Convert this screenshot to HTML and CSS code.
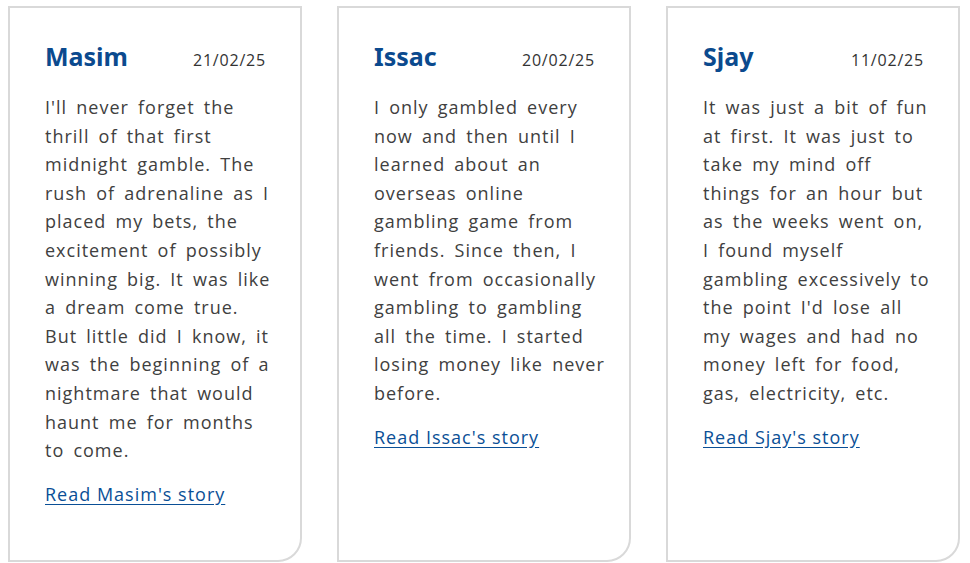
FILE: index.html
```html
<!DOCTYPE html>
<html lang="en">
<head>
<meta charset="utf-8">
<title>Stories</title>
<link rel="stylesheet" href="styles.css">
</head>
<body>
<div class="cards">
  <article class="card">
    <header class="card-head">
      <h2 class="name">Masim</h2>
      <span class="date">21/02/25</span>
    </header>
    <p class="text">I'll never forget the thrill of that first midnight gamble. The rush of adrenaline as I placed my bets, the excitement of possibly winning big. It was like a dream come true. But little did I know, it was the beginning of a nightmare that would haunt me for months to come.</p>
    <a class="link" href="#">Read Masim's story</a>
  </article>
  <article class="card">
    <header class="card-head">
      <h2 class="name">Issac</h2>
      <span class="date">20/02/25</span>
    </header>
    <p class="text">I only gambled every now and then until I learned about an overseas online gambling game from friends. Since then, I went from occasionally gambling to gambling all the time. I started losing money like never before.</p>
    <a class="link" href="#">Read Issac's story</a>
  </article>
  <article class="card">
    <header class="card-head">
      <h2 class="name">Sjay</h2>
      <span class="date">11/02/25</span>
    </header>
    <p class="text">It was just a bit of fun at first. It was just to take my mind off things for an hour but as the weeks went on, I found myself gambling excessively to the point I'd lose all my wages and had no money left for food, gas, electricity, etc.</p>
    <a class="link" href="#">Read Sjay's story</a>
  </article>
</div>
</body>
</html>
```
FILE: styles.css
```css
html, body {
  margin: 0;
  padding: 0;
  background: #ffffff;
}
body {
  font-family: "Open Sans", "Liberation Sans", sans-serif;
  color: #404040;
}
.cards {
  display: flex;
  gap: 35px;
  padding: 6px 0 0 8px;
}
.card {
  box-sizing: border-box;
  width: 294px;
  height: 556px;
  border: 2px solid #d9d9d9;
  border-bottom-right-radius: 24px;
  padding: 33px 22px 0 35px;
}
.card-head {
  display: flex;
  justify-content: space-between;
  align-items: baseline;
  margin-bottom: 22px;
  padding-right: 12px;
}
.name {
  margin: 0;
  font-family: "Noto Sans", sans-serif;
  font-weight: 700;
  font-size: 25px;
  line-height: 30px;
  color: #0b4a8e;
}
.date {
  font-size: 16px;
  letter-spacing: 0.8px;
  color: #333333;
}
.text {
  margin: 0 0 15px 0;
  font-size: 18px;
  letter-spacing: 1px;
  word-spacing: 3.5px;
  line-height: 28.6px;
}
.link {
  font-size: 18px;
  letter-spacing: 1px;
  line-height: 28.6px;
  color: #0a4f96;
  text-decoration: underline;
  text-underline-offset: 3px;
}
```
